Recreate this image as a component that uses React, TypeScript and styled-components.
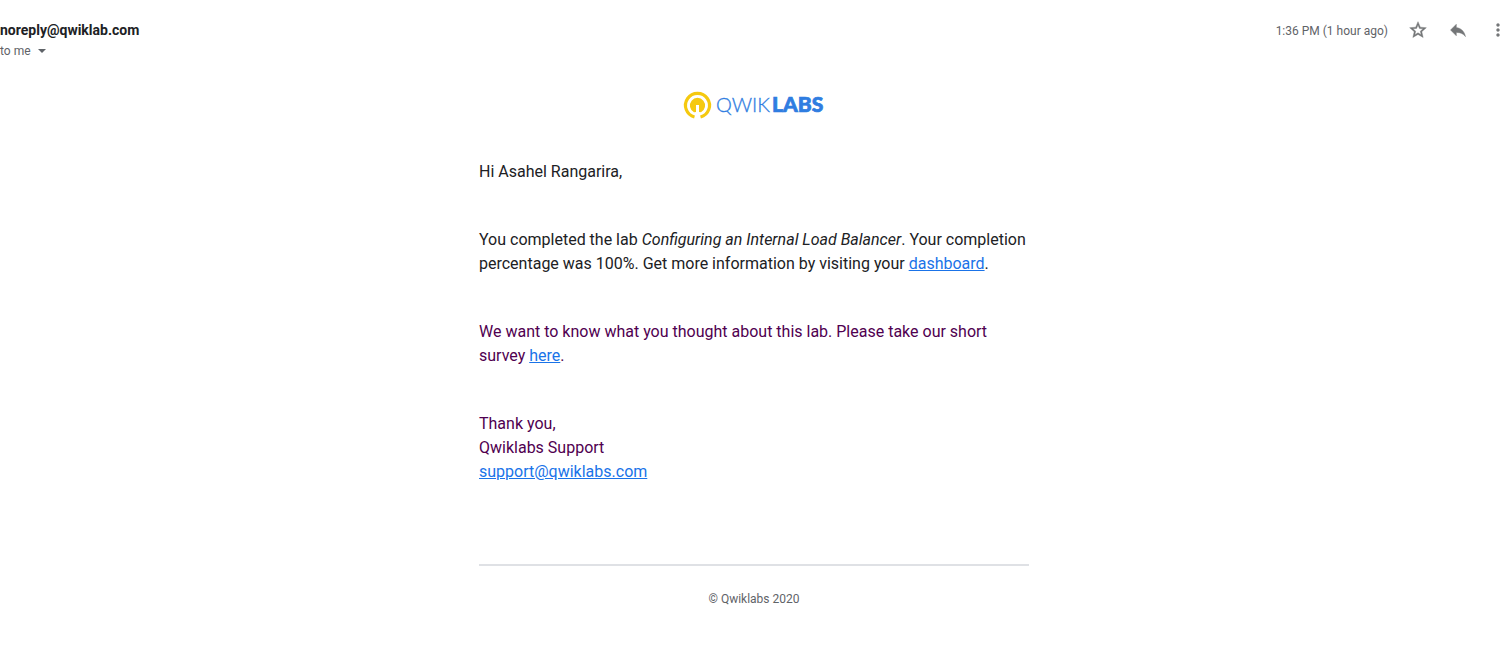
import React from "react";
import styled, { createGlobalStyle } from "styled-components";

const Global = createGlobalStyle`
  body { margin: 0; background: #fff; color: #202124; font-family: Roboto, "Liberation Sans", sans-serif; }
`;

const Header = styled.header`
  display: flex;
  justify-content: space-between;
  align-items: flex-start;
  padding-top: 10px;
`;

const Sender = styled.div`
  padding-top: 10px;
`;

const Address = styled.h1`
  margin: 0;
  font-size: 14px;
  line-height: 20px;
  font-weight: 700;
`;

const Recipient = styled.button`
  display: flex;
  align-items: center;
  gap: 7px;
  padding: 0;
  border: 0;
  background: none;
  color: #5f6368;
  font: inherit;
  font-size: 12px;
  line-height: 22px;
  cursor: pointer;
`;

const Caret = styled.span`
  border: 4px solid transparent;
  border-top-color: #5f6368;
  border-bottom: 0;
`;

const Actions = styled.div`
  display: flex;
  align-items: center;
`;

const Time = styled.time`
  margin-right: 10px;
  padding-top: 2px;
  color: #5f6368;
  font-size: 12px;
  line-height: 20px;
`;

const IconButton = styled.button<{ $edge?: boolean }>`
  display: flex;
  align-items: center;
  justify-content: center;
  width: ${(p) => (p.$edge ? 30 : 40)}px;
  height: 40px;
  padding: 0;
  padding-left: ${(p) => (p.$edge ? 10 : 0)}px;
  border: 0;
  background: none;
  color: #747678;
  cursor: pointer;
`;

const Message = styled.main`
  display: flex;
  flex-direction: column;
  box-sizing: border-box;
  width: 100%;
  max-width: 550px;
  margin: 0 auto;
  padding-top: 28px;
  font-size: 16px;
  line-height: 24px;
`;

const Brand = styled.div`
  display: flex;
  justify-content: center;
  margin-bottom: 38px;
`;

const Paragraph = styled.p<{ $quoted?: boolean }>`
  margin: 0 0 44px;
  color: ${(p) => (p.$quoted ? "#500050" : "#202124")};
`;

const Link = styled.a`
  color: #1a73e8;
  text-decoration: underline;
`;

const Footer = styled.footer`
  margin-top: 36px;
  padding-top: 21px;
  border-top: 2px solid #dfe1e5;
  color: #5f6368;
  font-size: 12px;
  text-align: center;
`;

const Logo = () => (
  <svg width="146" height="32" viewBox="-2 -2 146 32" role="img" aria-label="Qwiklabs">
    <path d="M11.5 25A12 12 0 1 1 17.5 25" fill="none" stroke="#f5c90f" strokeWidth="3.2" />
    <path d="M11 20.2A7.6 7.6 0 1 1 18 20.2L16 20V13H13V20Z" fill="#f5c90f" />
    <g fill="#2f7de1" stroke="#2f7de1" fontFamily="Lato, sans-serif">
      <text x="33" y="20" fontSize="20" fontWeight="300" strokeWidth="0.3">QWIK</text>
      <text x="89" y="20" fontSize="21" fontWeight="900" strokeWidth="0.7">LABS</text>
    </g>
  </svg>
);

const StarIcon = () => (
  <svg width="20" height="20" viewBox="0 0 24 24" fill="currentColor" stroke="currentColor" strokeWidth="0.5" aria-hidden="true">
    <path d="M22 9.24l-7.19-.62L12 2 9.19 8.63 2 9.24l5.46 4.73L5.82 21 12 17.27 18.18 21l-1.63-7.03L22 9.24zM12 15.4l-3.76 2.27 1-4.28-3.32-2.88 4.38-.38L12 6.1l1.71 4.04 4.38.38-3.32 2.88 1 4.28L12 15.4z" />
  </svg>
);

const ReplyIcon = () => (
  <svg width="20" height="20" viewBox="0 0 24 24" fill="currentColor" stroke="currentColor" strokeWidth="0.5" aria-hidden="true">
    <path d="M10 9V5l-7 7 7 7v-4.1c5 0 8.5 1.6 11 5.1-1-5-4-10-11-11z" />
  </svg>
);

const MoreIcon = () => (
  <svg width="20" height="20" viewBox="0 0 24 24" fill="currentColor" aria-hidden="true">
    <path d="M12 8c1.1 0 2-.9 2-2s-.9-2-2-2-2 .9-2 2 .9 2 2 2zm0 2c-1.1 0-2 .9-2 2s.9 2 2 2 2-.9 2-2-.9-2-2-2zm0 6c-1.1 0-2 .9-2 2s.9 2 2 2 2-.9 2-2-.9-2-2-2z" />
  </svg>
);

export default function App() {
  return (
    <>
      <Global />
      <Header>
        <Sender>
          <Address>noreply@qwiklab.com</Address>
          <Recipient>
            to me
            <Caret />
          </Recipient>
        </Sender>
        <Actions>
          <Time>1:36 PM (1 hour ago)</Time>
          <IconButton aria-label="Star"><StarIcon /></IconButton>
          <IconButton aria-label="Reply"><ReplyIcon /></IconButton>
          <IconButton aria-label="More" $edge><MoreIcon /></IconButton>
        </Actions>
      </Header>
      <Message>
        <Brand><Logo /></Brand>
        <Paragraph>Hi Asahel Rangarira,</Paragraph>
        <Paragraph>
          You completed the lab <em>Configuring an Internal Load Balancer</em>. Your completion
          percentage was 100%. Get more information by visiting your <Link href="#dashboard">dashboard</Link>.
        </Paragraph>
        <Paragraph $quoted>
          We want to know what you thought about this lab. Please take our short survey{" "}
          <Link href="#survey">here</Link>.
        </Paragraph>
        <Paragraph $quoted>
          Thank you,
          <br />
          Qwiklabs Support
          <br />
          <Link href="mailto:support@qwiklabs.com">support@qwiklabs.com</Link>
        </Paragraph>
        <Footer>© Qwiklabs 2020</Footer>
      </Message>
    </>
  );
}
